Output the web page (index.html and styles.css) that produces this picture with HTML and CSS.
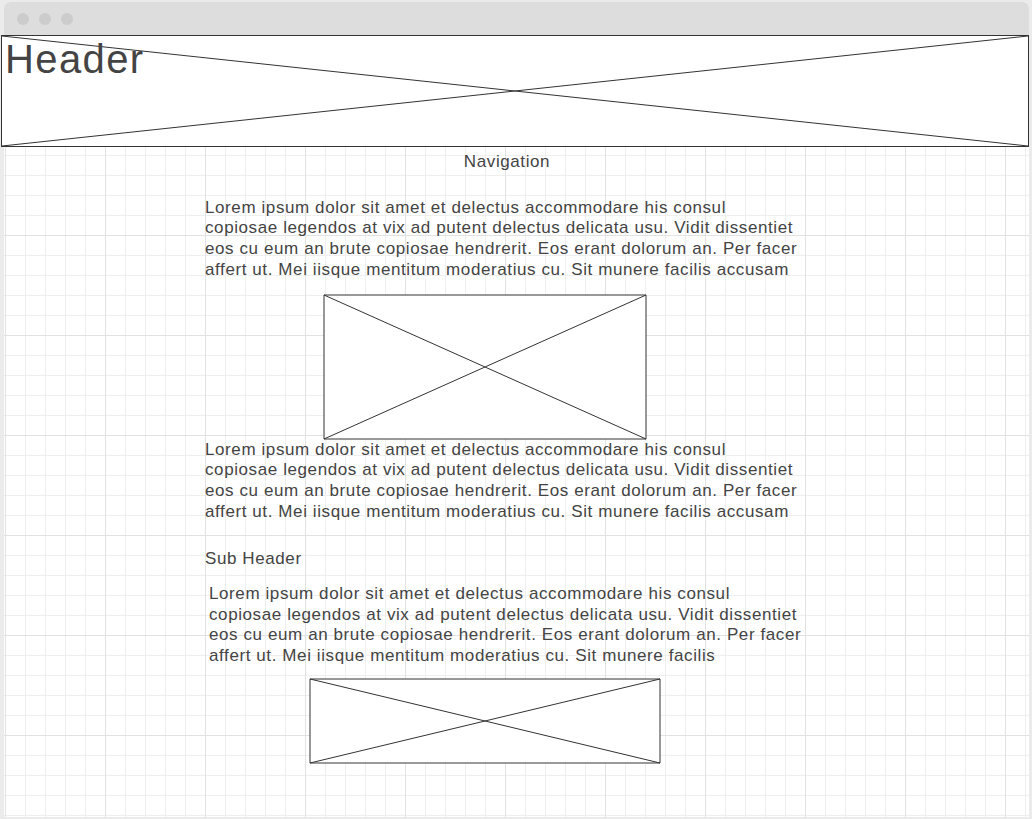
FILE: index.html
```html
<!DOCTYPE html>
<html>
<head>
<meta charset="utf-8">
<link rel="stylesheet" href="styles.css">
</head>
<body>
<div class="window">
  <div class="titlebar">
    <span class="dot"></span><span class="dot"></span><span class="dot"></span>
  </div>
  <div class="canvas">
    <div class="header-box">
      <svg class="xmark" viewBox="0 0 100 100" preserveAspectRatio="none"><line x1="0" y1="0" x2="100" y2="100"/><line x1="100" y1="0" x2="0" y2="100"/></svg>
      <div class="header-text">Header</div>
    </div>
    <div class="column">
      <div class="nav">Navigation</div>
      <p class="text p1">Lorem ipsum dolor sit amet et delectus accommodare his consul<br>copiosae legendos at vix ad putent delectus delicata usu. Vidit dissentiet<br>eos cu eum an brute copiosae hendrerit. Eos erant dolorum an. Per facer<br>affert ut. Mei iisque mentitum moderatius cu. Sit munere facilis accusam</p>
      <svg class="ph ph1" viewBox="0 0 100 100" preserveAspectRatio="none"><rect x="0" y="0" width="100" height="100"/><line x1="0" y1="0" x2="100" y2="100"/><line x1="100" y1="0" x2="0" y2="100"/></svg>
      <p class="text p2">Lorem ipsum dolor sit amet et delectus accommodare his consul<br>copiosae legendos at vix ad putent delectus delicata usu. Vidit dissentiet<br>eos cu eum an brute copiosae hendrerit. Eos erant dolorum an. Per facer<br>affert ut. Mei iisque mentitum moderatius cu. Sit munere facilis accusam</p>
      <div class="subheader">Sub Header</div>
      <p class="text p3">Lorem ipsum dolor sit amet et delectus accommodare his consul<br>copiosae legendos at vix ad putent delectus delicata usu. Vidit dissentiet<br>eos cu eum an brute copiosae hendrerit. Eos erant dolorum an. Per facer<br>affert ut. Mei iisque mentitum moderatius cu. Sit munere facilis</p>
      <svg class="ph ph2" viewBox="0 0 100 100" preserveAspectRatio="none"><rect x="0" y="0" width="100" height="100"/><line x1="0" y1="0" x2="100" y2="100"/><line x1="100" y1="0" x2="0" y2="100"/></svg>
    </div>
  </div>
</div>
</body>
</html>
```

FILE: styles.css
```css
html, body {
  margin: 0;
  padding: 0;
}
body {
  background: #ebebeb;
  width: 1032px;
  height: 819px;
  overflow: hidden;
  font-family: "Liberation Sans", Arial, sans-serif;
  color: #444;
}
.window {
  margin: 2px 0 0 4px;
  width: 1025px;
  height: 815px;
  border-radius: 6px 6px 0 0;
  background: #fff;
  display: flex;
  flex-direction: column;
}
.titlebar {
  height: 33px;
  flex: none;
  background: #dddddd;
  border-radius: 6px 6px 0 0;
  display: flex;
  align-items: center;
  gap: 10px;
  padding-left: 13px;
}
.dot {
  width: 12px;
  height: 12px;
  border-radius: 50%;
  background: #cccccc;
}
.canvas {
  flex: 1;
  background-color: #fff;
  background-image:
    linear-gradient(to right, #e2e2e2 1px, transparent 1px),
    linear-gradient(to bottom, #e2e2e2 1px, transparent 1px),
    linear-gradient(to right, #efefef 1px, transparent 1px),
    linear-gradient(to bottom, #efefef 1px, transparent 1px);
  background-size: 100px 100px, 100px 100px, 20px 20px, 20px 20px;
  background-position: 1px 0, 1px 0, 1px 0, 1px 0;
}
.header-box {
  position: relative;
  margin-left: -3px;
  width: 1026px;
  height: 110px;
  border: 1px solid #333;
  background: #fff;
}
.xmark {
  position: absolute;
  inset: 0;
  width: 100%;
  height: 100%;
}
.xmark line, .ph line, .ph rect {
  stroke: #333;
  stroke-width: 1;
  vector-effect: non-scaling-stroke;
  fill: none;
}
.ph rect {
  fill: #fff;
}
.header-text {
  position: relative;
  font-size: 40px;
  line-height: 46px;
  padding-left: 3px;
  letter-spacing: 0.035em;
}
.column {
  margin-left: 201px;
  width: 604px;
  display: flex;
  flex-direction: column;
  font-size: 17px;
  line-height: 20.7px;
  letter-spacing: 0.035em;
}
.nav {
  margin-top: 5px;
  text-align: center;
}
.text {
  margin: 0;
  white-space: nowrap;
}
.p1 {
  margin-top: 25px;
}
.ph {
  display: block;
  overflow: visible;
}
.ph1 {
  margin-top: 14px;
  margin-left: 119px;
  width: 322px;
  height: 144px;
}
.p2 {
  margin-top: 1px;
}
.subheader {
  margin-top: 27px;
}
.p3 {
  margin-top: 14px;
  margin-left: 4px;
}
.ph2 {
  margin-top: 12px;
  margin-left: 105px;
  width: 350px;
  height: 84px;
}
```
